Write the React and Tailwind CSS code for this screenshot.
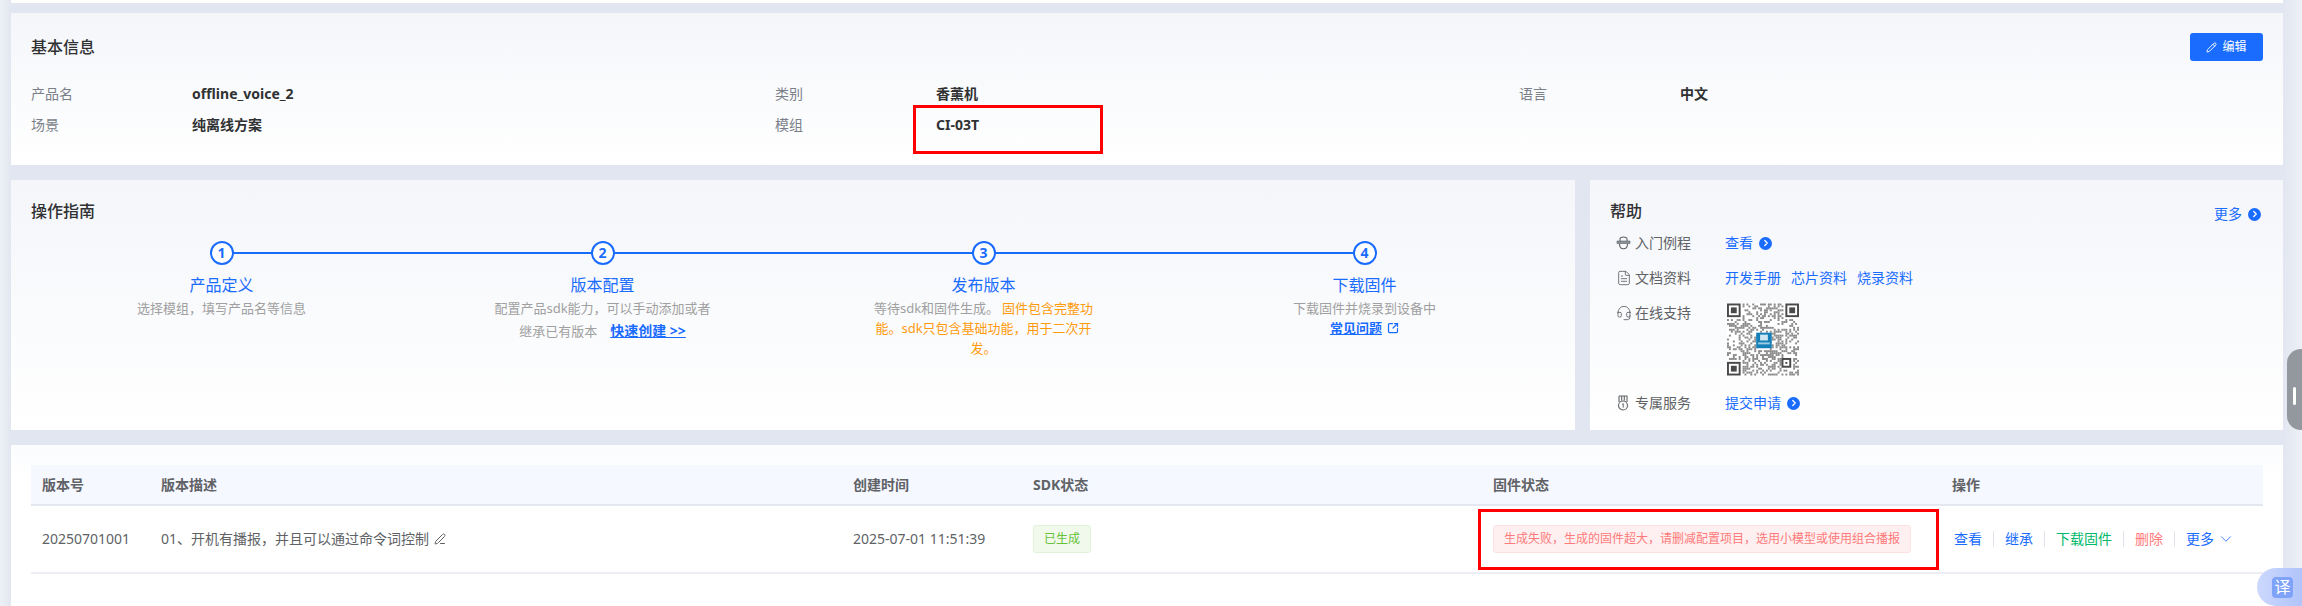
import { FileText, Headset, ChevronRight, ChevronDown, SquareArrowOutUpRight, PenLine, Pencil } from "lucide-react";

const font = "font-['Noto_Sans','Noto_Sans_CJK_SC',sans-serif]";

const steps = [
  { n: 1, title: "产品定义", desc: <p>选择模组，填写产品名等信息</p> },
  {
    n: 2,
    title: "版本配置",
    desc: (
      <div>
        <p>配置产品sdk能力，可以手动添加或者</p>
        <div className="flex h-[26px] items-center justify-center gap-[13px]">
          <span>继承已有版本</span>
          <a className="text-sm font-bold text-[#1a6cff] underline">快速创建 &gt;&gt;</a>
        </div>
      </div>
    ),
  },
  {
    n: 3,
    title: "发布版本",
    desc: (
      <p>
        等待sdk和固件生成。
        <span className="ml-[3px] text-[#ff9a0d]">固件包含完整功能。sdk只包含基础功能，用于二次开发。</span>
      </p>
    ),
  },
  {
    n: 4,
    title: "下载固件",
    desc: (
      <p>
        下载固件并烧录到设备中
        <br />
        <a className="font-bold text-[#1a6cff] underline inline-flex items-center gap-[5px]">
          常见问题
          <SquareArrowOutUpRight size={12} strokeWidth={2.5} />
        </a>
      </p>
    ),
  },
];

function InfoItem({ label, value }) {
  return (
    <div className="flex items-center text-sm">
      <span className="w-[161px] text-[#7a7f8a]">{label}</span>
      <span className="font-bold text-[#303133]">{value}</span>
    </div>
  );
}

function GoIcon() {
  return (
    <span className="inline-flex w-[13px] h-[13px] rounded-full bg-[#1a6cff] items-center justify-center text-white">
      <ChevronRight size={10} strokeWidth={3} />
    </span>
  );
}

function HatIcon() {
  return (
    <svg width="15" height="14" viewBox="0 0 15 14" fill="none" stroke="#606266" strokeWidth="1.1">
      <path d="M4 5V3.2C4 1.8 5.5 1 7.5 1s3.5.8 3.5 2.200V5" />
      <path d="M1 5h13v2.500H1z" fill="#8b8f97" strokeWidth="0.6" />
      <path d="M3.500 8c0 2.800 1.700 4.800 4 4.800s4-2 4-4.800" />
    </svg>
  );
}

function MedalIcon() {
  return (
    <svg width="14" height="16" viewBox="0 0 14 16" fill="none" stroke="#606266" strokeWidth="1.1">
      <path d="M3 1h8v6M3 1v6M5.700 1v4.500M8.300 1v4.500" />
      <circle cx="7" cy="10.500" r="4.500" />
      <path d="M6.200 9.200 7.200 8.600v4" strokeWidth="1" />
    </svg>
  );
}

function HelpRow({ icon, label, children, className = "" }) {
  return (
    <div className={"flex items-start text-sm " + className}>
      <span className="w-[19px] h-5 flex items-center text-[#606266]">{icon}</span>
      <span className="w-[90px] leading-5 text-[#606266]">{label}</span>
      <div className="leading-5 text-[#1a6cff]">{children}</div>
    </div>
  );
}

// 假二维码，只是一张示意图
function QrCode() {
  const size = 37;
  const cells = [];
  let seed = 71;
  for (let y = 0; y < size; y++) {
    for (let x = 0; x < size; x++) {
      seed = (seed * 1103515245 + 12345) & 0x7fffffff;
      const inFinder = (x < 8 && y < 8) || (x > 28 && y < 8) || (x < 8 && y > 28);
      const inLogo = x > 14 && x < 23 && y > 14 && y < 23;
      const inSmall = x > 27 && x < 34 && y > 27 && y < 34;
      if (!inFinder && !inLogo && !inSmall && (seed >> 16) % 100 < 45) {
        cells.push(<rect key={x + "-" + y} x={x} y={y} width="1" height="1" />);
      }
    }
  }
  const finder = (x, y, s, key) => (
    <g key={key}>
      <rect x={x} y={y} width={s} height={s} fill="#4a4a4a" />
      <rect x={x + 1} y={y + 1} width={s - 2} height={s - 2} fill="#fff" />
      <rect x={x + 2} y={y + 2} width={s - 4} height={s - 4} fill="#4a4a4a" />
    </g>
  );
  return (
    <svg width="72" height="73" viewBox="0 0 37 37" className="bg-white block">
      <g fill="#8a8a8a">{cells}</g>
      {finder(0, 0, 7, "a")}
      {finder(30, 0, 7, "b")}
      {finder(0, 30, 7, "c")}
      {finder(28, 28, 5, "d")}
      <rect x="15" y="15" width="8" height="8" fill="#1580b8" />
      <rect x="17" y="16" width="4" height="3" fill="#cfe6f3" />
      <rect x="16" y="20" width="6" height="1" fill="#9ccbe3" />
    </svg>
  );
}

export default function App() {
  return (
    <div className={font + " relative h-[606px] w-[2302px] overflow-hidden bg-[linear-gradient(to_right,#edf0f6,#e2e6f0_11px,#e2e6f0_2283px,#edf0f6)] px-[11px] pr-[19px]"}>
      <div className="h-[3px] bg-white" />

      {/* 基本信息 */}
      <section className="relative mt-[10px] h-[152px] bg-gradient-to-b from-[#f4f6fa] to-white px-5 pt-5">
        <div className="flex items-center justify-between h-[28px]">
          <h2 className="text-base font-medium text-[#303133]">基本信息</h2>
          <button className="w-[73px] h-[28px] rounded-[3px] bg-[#1a6cff] text-white text-xs flex items-center justify-center gap-[5px]">
            <Pencil size={11} />
            编辑
          </button>
        </div>
        <div className="mt-[23px] grid grid-cols-3 gap-y-[11px] h-[20px] auto-rows-[20px]">
          <InfoItem label="产品名" value="offline_voice_2" />
          <InfoItem label="类别" value="香薰机" />
          <InfoItem label="语言" value="中文" />
          <InfoItem label="场景" value="纯离线方案" />
          <InfoItem label="模组" value="CI-03T" />
        </div>
        <div className="absolute left-[902px] top-[92px] w-[190px] h-[49px] border-[3px] border-[#ff0000]" />
      </section>

      {/* 操作指南 + 帮助 */}
      <div className="mt-[15px] flex gap-[15px] h-[250px]">
        <section className="w-[1564px] bg-gradient-to-b from-[#f4f6fa] to-white px-5 pt-5">
          <h2 className="text-base font-medium leading-[22px] text-[#303133]">操作指南</h2>
          <div className="mt-[19px] grid grid-cols-4 w-[1524px]">
            {steps.map((s, i) => (
              <div key={s.n} className="relative flex flex-col items-center">
                {i < 3 && <div className="absolute left-1/2 top-[11px] w-full h-[2px] bg-[#1a6cff]" />}
                <div className="relative z-10 w-6 h-6 rounded-full border-2 border-[#1a6cff] bg-white text-[#1a6cff] text-sm font-bold flex items-center justify-center">
                  {s.n}
                </div>
                <h3 className="mt-[9px] text-base leading-[22px] text-[#1a6cff]">{s.title}</h3>
                <div className="mt-[2px] w-[222px] text-center text-[13px] leading-5 text-[#a0a0a0]">{s.desc}</div>
              </div>
            ))}
          </div>
        </section>

        <section className="flex-1 bg-gradient-to-b from-[#f4f6fa] to-white pl-5 pr-[22px] pt-5">
          <div className="flex items-start justify-between">
            <h2 className="text-base font-medium leading-[22px] text-[#303133]">帮助</h2>
            <a className="mt-[4px] text-sm text-[#1a6cff] flex items-center gap-[6px]">
              更多 <GoIcon />
            </a>
          </div>
          <div className="mt-[9px] pl-[6px]">
            <HelpRow icon={<HatIcon />} label="入门例程">
              <span className="flex items-center gap-[6px]">查看 <GoIcon /></span>
            </HelpRow>
            <HelpRow icon={<FileText size={16} strokeWidth={1.3} />} label="文档资料" className="mt-[15px]">
              <span className="flex gap-[10px]"><a>开发手册</a><a>芯片资料</a><a>烧录资料</a></span>
            </HelpRow>
            <HelpRow icon={<Headset size={16} strokeWidth={1.3} />} label="在线支持" className="mt-[15px]">
              <div className="pl-[2px]"><QrCode /></div>
            </HelpRow>
            <HelpRow icon={<MedalIcon />} label="专属服务" className="mt-[17px]">
              <span className="flex items-center gap-[6px]">提交申请 <GoIcon /></span>
            </HelpRow>
          </div>
        </section>
      </div>

      {/* 版本列表 */}
      <section className="relative mt-[15px] h-[161px] bg-gradient-to-b from-[#fbfcfe] to-white to-[20%] px-5 pt-5">
        <table className="table-fixed w-[2232px] text-sm text-[#606266] border-collapse">
          <colgroup>
            <col className="w-[119px]" />
            <col className="w-[692px]" />
            <col className="w-[180px]" />
            <col className="w-[460px]" />
            <col className="w-[459px]" />
            <col />
          </colgroup>
          <thead>
            <tr className="h-[40px] bg-[#f5f8ff] border-b-2 border-[#e4e7ef] text-left">
              {["版本号", "版本描述", "创建时间", "SDK状态", "固件状态", "操作"].map((h) => (
                <th key={h} className="px-[11px] font-bold">{h}</th>
              ))}
            </tr>
          </thead>
          <tbody>
            <tr className="h-[68px] border-b-2 border-[#eceef3]">
              <td className="px-[11px]">20250701001</td>
              <td className="px-[11px]">
                <span className="inline-flex items-center gap-[5px]">
                  01、开机有播报，并且可以通过命令词控制
                  <PenLine size={12} />
                </span>
              </td>
              <td className="px-[11px]">2025-07-01 11:51:39</td>
              <td className="px-[11px]">
                <span className="inline-flex h-[28px] items-center rounded-[3px] border border-[#e1f3d8] bg-[#f0f9eb] px-[10px] text-xs text-[#67c23a]">已生成</span>
              </td>
              <td className="px-[11px]">
                <span className="inline-flex h-[28px] items-center whitespace-nowrap rounded-[3px] border border-[#fde2e2] bg-[#fef0f0] px-[10px] text-xs text-[#ff7a7a]">
                  生成失败，生成的固件超大，请删减配置项目，选用小模型或使用组合播报
                </span>
              </td>
              <td className="px-[11px]">
                <div className="flex items-center pl-[2px] whitespace-nowrap">
                  <a className="text-[#1a6cff]">查看</a>
                  <span className="mx-[11px] h-[16px] w-px bg-[#dfe3ea]" />
                  <a className="text-[#1a6cff]">继承</a>
                  <span className="mx-[11px] h-[16px] w-px bg-[#dfe3ea]" />
                  <a className="text-[#00b969]">下载固件</a>
                  <span className="mx-[11px] h-[16px] w-px bg-[#dfe3ea]" />
                  <a className="text-[#ff7a7a]">删除</a>
                  <span className="mx-[11px] h-[16px] w-px bg-[#dfe3ea]" />
                  <a className="text-[#1a6cff] flex items-center gap-[3px]">更多 <ChevronDown size={18} strokeWidth={1.1} /></a>
                </div>
              </td>
            </tr>
          </tbody>
        </table>
        <div className="absolute left-[1467px] top-[64px] w-[461px] h-[61px] border-[3px] border-[#ff0000]" />
      </section>

      {/* 右侧悬浮 */}
      <div className="absolute right-0 top-[349px] w-[15px] h-[81px] rounded-l-[14px] bg-[#93979e] flex items-center justify-center">
        <div className="w-[3px] h-[18px] rounded-full bg-white mt-[12px]" />
      </div>
      <div className="absolute right-0 top-[568px] w-[45px] h-[38px] rounded-tl-[22px] rounded-bl-[22px] bg-gradient-to-r from-[#ccd8fd] to-[#b0c4fb] flex items-start pl-[15px] pt-[9px]">
        <div className="w-[21px] h-[21px] rounded-[4px] bg-[#7fa3f8] text-white text-base leading-[21px] text-center">译</div>
      </div>
    </div>
  );
}
